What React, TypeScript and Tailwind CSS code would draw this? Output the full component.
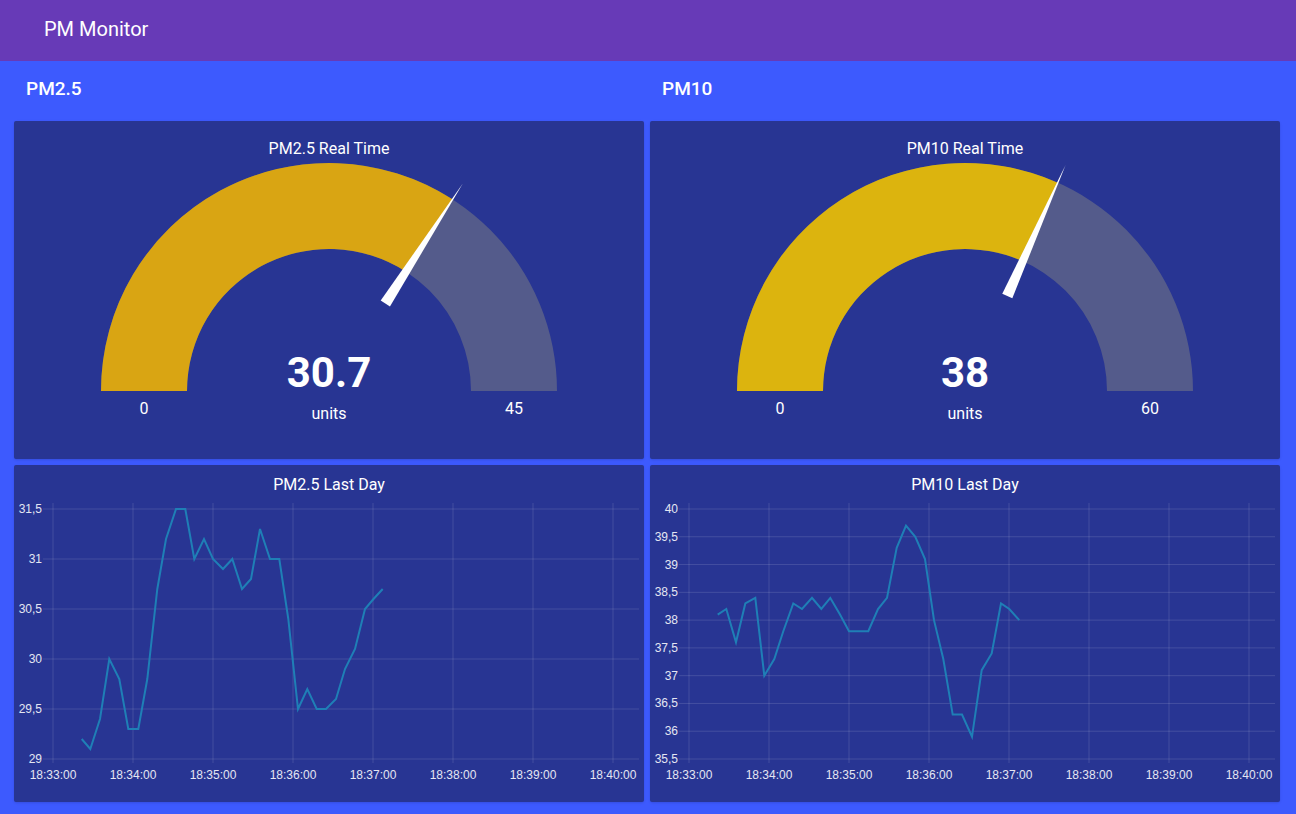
import React from "react";

const CARD = "bg-[#283593] rounded-[2px] shadow-sm";

type Gauge = {
  title: string;
  value: number;
  max: number;
  label: string;
  fill: string;
};

const gauges: Gauge[] = [
  { title: "PM2.5 Real Time", value: 30.7, max: 45, label: "30.7", fill: "#d9a513" },
  { title: "PM10 Real Time", value: 38, max: 60, label: "38", fill: "#dcb40e" },
];

// gauge geometry (svg coords)
const CX = 315;
const CY = 230;
const R_OUT = 228;
const R_IN = 142;

const pt = (r: number, f: number) => {
  const a = Math.PI * (1 - f);
  return [CX + r * Math.cos(a), CY - r * Math.sin(a)];
};

const band = (f0: number, f1: number) => {
  const [x0, y0] = pt(R_OUT, f0);
  const [x1, y1] = pt(R_OUT, f1);
  const [x2, y2] = pt(R_IN, f1);
  const [x3, y3] = pt(R_IN, f0);
  return `M${x0} ${y0} A${R_OUT} ${R_OUT} 0 0 1 ${x1} ${y1} L${x2} ${y2} A${R_IN} ${R_IN} 0 0 0 ${x3} ${y3} Z`;
};

const needle = (f: number) => {
  const a = Math.PI * (1 - f);
  const [tx, ty] = pt(247, f);
  const [bx, by] = pt(104, f);
  const px = Math.sin(a) * 5.5;
  const py = Math.cos(a) * 5.5;
  return `${tx},${ty} ${bx + px},${by + py} ${bx - px},${by - py}`;
};

const GaugeCard = ({ g }: { g: Gauge }) => {
  const f = g.value / g.max;
  return (
    <div className={`${CARD} h-[338px] flex flex-col`}>
      <div className="h-[40px] pt-[18px] text-center text-[16px] leading-[20px] text-white">
        {g.title}
      </div>
      <svg width="630" height="298" className="block">
        <path d={band(0, 1)} fill="#545b8b" />
        <path d={band(0, f)} fill={g.fill} />
        <polygon points={needle(f)} fill="#ffffff" />
        <text x={CX} y={CY - 4} textAnchor="middle" fill="#ffffff" fontSize="42" fontWeight="700" fontFamily="Roboto, sans-serif">
          {g.label}
        </text>
        <text x={CX} y={CY + 28} textAnchor="middle" fill="#ffffff" fontSize="16" fontFamily="Roboto, sans-serif">
          units
        </text>
        <text x={CX - 185} y={CY + 23} textAnchor="middle" fill="#ffffff" fontSize="16" fontFamily="Roboto, sans-serif">
          0
        </text>
        <text x={CX + 185} y={CY + 23} textAnchor="middle" fill="#ffffff" fontSize="16" fontFamily="Roboto, sans-serif">
          {g.max}
        </text>
      </svg>
    </div>
  );
};

type Chart = {
  title: string;
  top: number;
  bottom: number;
  ticks: string[];
  points: [number, number][];
};

const pm25: [number, number][] = [
  [28.7, 29.2], [37.3, 29.1], [47, 29.4], [56.3, 30.0], [66.3, 29.8], [75.3, 29.3],
  [85.3, 29.3], [94.3, 29.8], [104.3, 30.7], [113, 31.2], [123, 31.5], [132.3, 31.5],
  [141.3, 31.0], [151, 31.2], [160, 31.0], [170, 30.9], [179.3, 31.0], [189, 30.7],
  [198, 30.8], [207, 31.3], [217, 31.0], [226.3, 31.0], [235.3, 30.4], [245, 29.5],
  [254.3, 29.7], [263.7, 29.5], [273, 29.5], [283, 29.6], [292, 29.9], [302, 30.1],
  [312, 30.5], [320.5, 30.6], [329.7, 30.7],
];

const pm10: [number, number][] = [
  [28.7, 38.1], [37.3, 38.2], [47, 37.6], [56.3, 38.3], [66.3, 38.4], [75.3, 37.0],
  [85.3, 37.3], [94.3, 37.8], [104.3, 38.3], [113, 38.2], [123, 38.4], [132.3, 38.2],
  [141.3, 38.4], [151, 38.1], [160, 37.8], [170, 37.8], [179.3, 37.8], [189, 38.2],
  [198, 38.4], [207.7, 39.3], [217, 39.7], [226.3, 39.5], [236, 39.1], [245, 38.0],
  [254.3, 37.3], [263.7, 36.3], [273, 36.3], [283, 35.9], [292.7, 37.1], [302.7, 37.4],
  [312, 38.3], [320.3, 38.2], [330.3, 38.0],
];

const charts: Chart[] = [
  {
    title: "PM2.5 Last Day",
    top: 31.5,
    bottom: 29,
    ticks: ["31,5", "31", "30,5", "30", "29,5", "29"],
    points: pm25,
  },
  {
    title: "PM10 Last Day",
    top: 40,
    bottom: 35.5,
    ticks: ["40", "39,5", "39", "38,5", "38", "37,5", "37", "36,5", "36", "35,5"],
    points: pm10,
  },
];

const times = ["18:33:00", "18:34:00", "18:35:00", "18:36:00", "18:37:00", "18:38:00", "18:39:00", "18:40:00"];

// plot area (svg coords)
const PL = 39;
const PR = 625;
const PT = 8;
const PB = 258;
const GRID = "rgba(255,255,255,0.13)";

const ChartCard = ({ c }: { c: Chart }) => {
  const yOf = (v: number) => PT + ((c.top - v) / (c.top - c.bottom)) * (PB - PT);
  const step = (PB - PT) / (c.ticks.length - 1);
  const line = c.points.map(([x, v]) => `${PL + x},${yOf(v)}`).join(" ");
  return (
    <div className={`${CARD} h-[337px] flex flex-col`}>
      <div className="h-[36px] pt-[10px] text-center text-[16px] leading-[20px] text-white">
        {c.title}
      </div>
      <svg width="630" height="290" className="block" fontFamily="'Liberation Sans', Arial, sans-serif">
        {c.ticks.map((t, i) => (
          <g key={t}>
            <line x1={PL - 10} x2={PR} y1={PT + i * step} y2={PT + i * step} stroke={GRID} strokeWidth="1" />
            <text x={PL - 11} y={PT + i * step + 4} textAnchor="end" fontSize="12" fill="#e4e6f2">
              {t}
            </text>
          </g>
        ))}
        {times.map((t, i) => (
          <g key={t}>
            <line x1={PL + i * 80} x2={PL + i * 80} y1={PT - 6} y2={PB + 4} stroke={GRID} strokeWidth="1" />
            <text x={PL + i * 80} y={PB + 20} textAnchor="middle" fontSize="12" fill="#e4e6f2">
              {t}
            </text>
          </g>
        ))}
        <polyline points={line} fill="none" stroke="#1f7fb6" strokeWidth="2" strokeLinejoin="miter" />
      </svg>
    </div>
  );
};

export default function App() {
  return (
    <div className="min-h-screen w-full bg-[#3d5afe] font-['Roboto',sans-serif]">
      <header className="h-[61px] bg-[#673ab7] flex items-center px-[44px] pb-[3px] text-[20px] text-white">
        PM Monitor
      </header>
      <main className="grid grid-cols-2 gap-x-[6px] pl-[14px] pr-[16px] pb-[12px]">
        {["PM2.5", "PM10"].map((name, i) => (
          <section key={name} className="flex flex-col gap-[6px]">
            <h2 className="h-[54px] flex items-center pl-[12px] pt-[2px] text-[19px] font-medium text-white">
              {name}
            </h2>
            <GaugeCard g={gauges[i]} />
            <ChartCard c={charts[i]} />
          </section>
        ))}
      </main>
    </div>
  );
}
